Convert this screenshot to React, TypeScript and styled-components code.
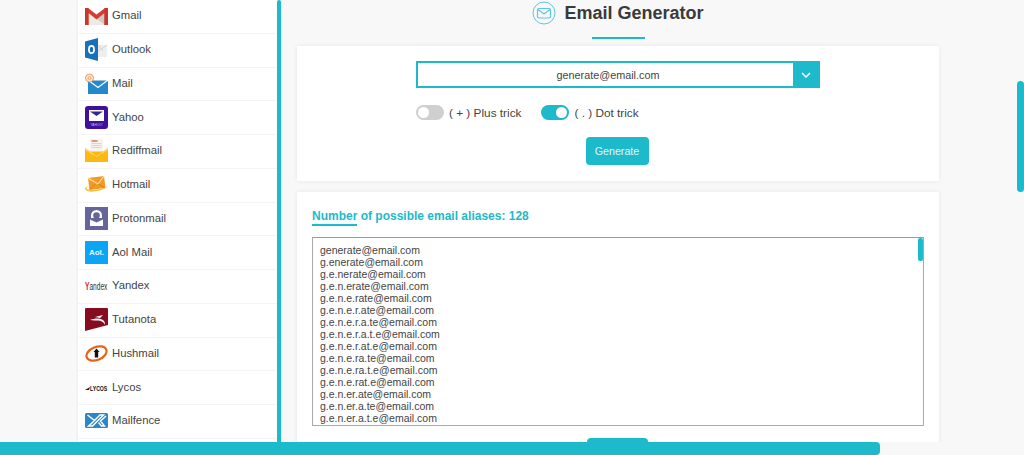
import React from "react";
import styled, { createGlobalStyle } from "styled-components";

const Global = createGlobalStyle`
  html, body { margin: 0; padding: 0; background: #f8f8f8; height: 100%; overflow: hidden; }
  body { font-family: "Liberation Sans", Arial, sans-serif; color: #333; }
`;

const teal = "#1cbaca";

const Page = styled.div`
  position: relative;
  width: 1024px;
  height: 455px;
  overflow: hidden;
  display: flex;
  padding-left: 78px;
  box-sizing: border-box;
`;
const Sidebar = styled.nav`
  width: 203px;
  flex: none;
  height: 455px;
  background: #fff;
  position: relative;
  box-shadow: 0 0 3px rgba(0, 0, 0, 0.08);
  box-sizing: border-box;
  padding-right: 4px;
`;
const SideThumb = styled.div`
  position: absolute;
  right: 0;
  top: 0;
  bottom: 0;
  width: 4px;
  background: ${teal};
  border-radius: 2px 2px 0 0;
`;
const Row = styled.a`
  display: flex;
  align-items: center;
  height: 33.75px;
  box-sizing: border-box;
  padding-left: 7px;
  gap: 4px;
  border-bottom: 1px solid #f4f4f4;
  font-size: 11.3px;
  color: #444;
`;
const RowLabel = styled.span`
  margin-top: -2px;
`;
const Main = styled.main`
  width: 642px;
  margin-left: 16px;
  flex: none;
  display: block;
`;
const Header = styled.header`
  height: 46px;
  display: flex;
  flex-direction: column;
  align-items: center;
  box-sizing: border-box;
`;
const TitleRow = styled.div`
  display: flex;
  align-items: center;
  gap: 8px;
  height: 26px;
`;
const Title = styled.h1`
  margin: 0;
  font-size: 18px;
  line-height: 26px;
  font-weight: 700;
  color: #3a3a3a;
`;
const TitleBar = styled.div`
  width: 53px;
  height: 2px;
  background: ${teal};
  margin-top: 11px;
`;
const Card = styled.section`
  background: #fff;
  box-shadow: 0 0 5px rgba(0, 0, 0, 0.07);
`;
const FormCard = styled(Card)`
  height: 135px;
  box-sizing: border-box;
  padding: 15px 119px 0;
  display: flex;
  flex-direction: column;
`;
const SelectBox = styled.div`
  display: flex;
  height: 27px;
  width: 404px;
  box-sizing: border-box;
  border: 2px solid ${teal};
`;
const SelectValue = styled.div`
  flex: 1;
  display: flex;
  align-items: center;
  justify-content: center;
  padding-left: 5px;
  font-size: 10.8px;
  color: #444;
`;
const SelectArrow = styled.div`
  width: 25px;
  background: ${teal};
  display: flex;
  align-items: center;
  justify-content: center;
`;
const Tricks = styled.div`
  display: flex;
  align-items: center;
  margin-top: 17px;
  height: 15px;
`;
const Trick = styled.label`
  display: flex;
  align-items: center;
  gap: 5px;
  font-size: 11.8px;
  color: #444;
  margin-right: 20px;
`;
const Toggle = styled.span<{ $on?: boolean }>`
  width: 28px;
  height: 15px;
  border-radius: 8px;
  background: ${(p) => (p.$on ? teal : "#cfcfcf")};
  display: flex;
  align-items: center;
  justify-content: ${(p) => (p.$on ? "flex-end" : "flex-start")};
  padding: 0 2px;
  box-sizing: border-box;
  &::after {
    content: "";
    width: 11px;
    height: 11px;
    border-radius: 50%;
    background: #fff;
  }
`;
const GenerateButton = styled.button`
  align-self: center;
  margin-top: 17px;
  margin-left: -2px;
  width: 63px;
  height: 28px;
  padding: 0;
  border: none;
  border-radius: 4px;
  background: ${teal};
  color: #e2f6f8;
  font: 10.7px "Liberation Sans", Arial, sans-serif;
`;
const ResultCard = styled(Card)`
  margin-top: 11px;
  height: 280px;
  box-sizing: border-box;
  padding: 17px 15px 0;
`;
const CountTitle = styled.h2`
  margin: 0;
  font-size: 12px;
  line-height: 14px;
  font-weight: 700;
  color: ${teal};
`;
const CountBar = styled.div`
  width: 45px;
  height: 2px;
  margin-top: 1px;
  background: ${teal};
`;
const Results = styled.div`
  position: relative;
  margin-top: 11px;
  height: 189px;
  box-sizing: border-box;
  border: 1px solid #aaa;
  border-top-color: #999;
  padding: 6px 7px 0;
  overflow: hidden;
  font-size: 10.5px;
  line-height: 12px;
  color: #444;
`;
const ResultThumb = styled.div`
  position: absolute;
  top: 0;
  right: 0;
  width: 5px;
  height: 23px;
  border-radius: 2px;
  background: ${teal};
`;
const BottomTrack = styled.div`
  position: absolute;
  left: 0;
  bottom: 0;
  width: 1017px;
  height: 13px;
  background: #f8f8f8;
`;
const BottomThumb = styled.div`
  width: 880px;
  height: 13px;
  background: ${teal};
  border-radius: 0 4px 4px 0;
`;
const BackTab = styled.div`
  position: absolute;
  left: 587px;
  bottom: 13px;
  width: 61px;
  height: 4px;
  background: ${teal};
  border-radius: 5px 5px 0 0;
`;
const PageGutter = styled.div`
  position: absolute;
  right: 0;
  top: 0;
  bottom: 0;
  width: 7px;
  background: #f8f8f8;
`;
const PageThumb = styled.div`
  position: absolute;
  right: 0;
  top: 81px;
  width: 7px;
  height: 111px;
  background: ${teal};
  border-radius: 4px;
`;

const Svg = styled.svg`
  width: 23px;
  height: 23px;
  flex: none;
  display: block;
  margin-top: -1px;
`;

const icons: Record<string, React.ReactNode> = {
  Gmail: (
    <Svg viewBox="0 0 23 23">
      <path d="M3 8l8.500 6.500L20 8v13H3z" fill="#efebe4" />
      <path d="M11.500 14.500L20 8v13z" fill="#cfc9c0" />
      <path d="M0 4h3l8.500 6.500L20 4h3v17h-3.500V9l-8 6.500L3.500 9v12H0z" fill="#d63c33" />
      <path d="M0 4h3.500v17H0zM19.500 4H23v17h-3.500z" fill="#c5372f" />
    </Svg>
  ),
  Outlook: (
    <Svg viewBox="0 0 23 23">
      <path d="M13 7l9 0v12h-9z" fill="#eee" />
      <path d="M13 13l9-6M13 7l5 6" stroke="#d5d5d5" strokeWidth="1" fill="none" />
      <path d="M0 3.500L13 0v23L0 19.500z" fill="#1a6fba" />
      <ellipse cx="6.500" cy="11.500" rx="2.600" ry="3.600" fill="none" stroke="#fff" strokeWidth="1.700" />
    </Svg>
  ),
  Mail: (
    <Svg viewBox="0 0 23 23">
      <path d="M3 8.500h20V22H3z" fill="#2389cc" />
      <path d="M3 8l10 7.500L23 8" stroke="#fff" strokeWidth="1.200" fill="none" />
      <circle cx="4.500" cy="6" r="4" fill="#fbeadc" stroke="#ef9a55" strokeWidth="1" />
      <circle cx="4.500" cy="6" r="1.500" fill="none" stroke="#ef9a55" strokeWidth="0.900" />
    </Svg>
  ),
  Yahoo: (
    <Svg viewBox="0 0 23 23">
      <rect width="23" height="23" rx="3" fill="#40109a" />
      <rect x="4" y="4" width="15" height="11" fill="#fff" />
      <path d="M5 5.500h13l-6.500 4.500z" fill="#2f2a90" />
      <text x="11.500" y="20" textAnchor="middle" fontFamily="Liberation Sans" fontSize="3.200" fill="#cdbdf0">
        YAHOO!
      </text>
    </Svg>
  ),
  Rediffmail: (
    <Svg viewBox="0 0 23 23">
      <path d="M5 0h13v13H5z" fill="#f6f3ee" />
      <path d="M6.500 2h6" stroke="#c33" strokeWidth="1" />
      <path d="M6.500 4.500h10M6.500 6.500h10M6.500 8.500h10" stroke="#d6d3cc" strokeWidth="0.900" />
      <path d="M0 9l5 3.500h13L23 9v14H0z" fill="#fdb813" />
      <path d="M0 9l11.500 8L23 9v2l-11.500 7L0 11z" fill="#ffd36a" />
    </Svg>
  ),
  Hotmail: (
    <Svg viewBox="0 0 23 23">
      <path d="M3 5l16-2 1.500 12L4.500 17z" fill="#f39a24" />
      <path d="M3 5l10 6 6-8" fill="none" stroke="#fde0a8" strokeWidth="1.100" />
      <path d="M4.500 17l6-6M20 15l-7-4" stroke="#d9761a" strokeWidth="0.900" fill="none" />
      <path d="M0 15.500c2-3 3-3 3-3s-2 2-1 3.500c2 2 14 1 21-3-6 6-22 8-23 2.500z" fill="#f4c542" />
    </Svg>
  ),
  Protonmail: (
    <Svg viewBox="0 0 23 23">
      <rect width="23" height="23" fill="#65659c" />
      <path d="M6 11V8.500a5.500 5.500 0 0 1 11 0V11z" fill="#fff" />
      <circle cx="11.500" cy="8.500" r="3.300" fill="#65659c" />
      <path d="M5 12.500l6.500 3L18 12.500V19H5z" fill="#fff" />
    </Svg>
  ),
  "Aol Mail": (
    <Svg viewBox="0 0 23 23">
      <rect width="23" height="23" fill="#0aa5f5" />
      <text x="11.500" y="14" textAnchor="middle" fontFamily="Liberation Sans" fontSize="8" fontWeight="700" fill="#e8f6ff">
        Aol.
      </text>
    </Svg>
  ),
  Yandex: (
    <Svg viewBox="0 0 23 23">
      <text transform="translate(0 16) scale(0.63 1)" fontFamily="Liberation Sans" fontSize="10.500" fill="#333">
        <tspan fill="#d2232a" fontWeight="700">Y</tspan>andex
      </text>
    </Svg>
  ),
  Tutanota: (
    <Svg viewBox="0 0 23 23">
      <path d="M1 0h21a1 1 0 0 1 1 1v16L0 23V1a1 1 0 0 1 1-1z" fill="#850d1e" />
      <path d="M5 12c5-2 9-2 12-.5 2 1 3 2.500 3 5.500-1-3-4-4.500-7-4.500-2 0-5 0-8-.5zM10 9l8-2-3 3z" fill="#fff" />
    </Svg>
  ),
  Hushmail: (
    <Svg viewBox="0 0 23 23">
      <ellipse cx="11.500" cy="11.500" rx="10.500" ry="6.500" transform="rotate(-22 11.500 11.500)" fill="none" stroke="#e8631a" strokeWidth="2.200" />
      <path d="M11.500 6.500l3 3.500h-1.300v5.500H9.800V10H8.500z" fill="#111" />
    </Svg>
  ),
  Lycos: (
    <Svg viewBox="0 0 23 23">
      <path d="M0 14l5-3-1 3z" fill="#222" />
      <text transform="translate(5 14.500) scale(0.74 1)" fontFamily="Liberation Sans" fontSize="7" fontWeight="700" fill="#111">
        LYCOS
      </text>
    </Svg>
  ),
  Mailfence: (
    <Svg viewBox="0 0 23 23">
      <path d="M1.500 4h20a1.500 1.500 0 0 1 1.500 1.500v12a1.500 1.500 0 0 1-1.500 1.500h-20A1.500 1.500 0 0 1 0 17.500v-12A1.500 1.500 0 0 1 1.500 4z" fill="#2f86c6" />
      <path d="M2.500 6l7 5.500-6 5.500h4l11-11h-3.500l-9 9M21 7l-5.500 5 4 5h-3l-3-3.500" fill="none" stroke="#fff" strokeWidth="1.400" />
    </Svg>
  ),
};

const aliases = [
  "generate", "g.enerate", "g.e.nerate", "g.e.n.erate", "g.e.n.e.rate", "g.e.n.e.r.ate",
  "g.e.n.e.r.a.te", "g.e.n.e.r.a.t.e", "g.e.n.e.r.at.e", "g.e.n.e.ra.te", "g.e.n.e.ra.t.e",
  "g.e.n.e.rat.e", "g.e.n.er.ate", "g.e.n.er.a.te", "g.e.n.er.a.t.e",
];

export default function App() {
  return (
    <>
      <Global />
      <Page>
        <Sidebar>
          {Object.keys(icons).map((name) => (
            <Row key={name}>
              {icons[name]}
              <RowLabel>{name}</RowLabel>
            </Row>
          ))}
          <SideThumb />
        </Sidebar>
        <Main>
          <Header>
            <TitleRow>
              <svg width="24" height="24" viewBox="0 0 24 24" fill="none" stroke="#62c4e6" strokeWidth="1">
                <circle cx="12" cy="12" r="11" />
                <rect x="5.500" y="7.500" width="13" height="9.500" rx="1.500" strokeWidth="1.200" />
                <path d="M6 8.500l6 4.500 6-4.500" strokeWidth="1.200" />
              </svg>
              <Title>Email Generator</Title>
            </TitleRow>
            <TitleBar />
          </Header>
          <FormCard>
            <SelectBox>
              <SelectValue>generate@email.com</SelectValue>
              <SelectArrow>
                <svg width="10" height="6" viewBox="0 0 10 6" fill="none" stroke="#fff" strokeWidth="1.500">
                  <path d="M1 1l4 4 4-4" />
                </svg>
              </SelectArrow>
            </SelectBox>
            <Tricks>
              <Trick>
                <Toggle />( + ) Plus trick
              </Trick>
              <Trick>
                <Toggle $on />( . ) Dot trick
              </Trick>
            </Tricks>
            <GenerateButton>Generate</GenerateButton>
          </FormCard>
          <ResultCard>
            <CountTitle>Number of possible email aliases: 128</CountTitle>
            <CountBar />
            <Results>
              {aliases.map((a) => (
                <div key={a}>{a}@email.com</div>
              ))}
              <ResultThumb />
            </Results>
          </ResultCard>
        </Main>
        <PageGutter />
        <PageThumb />
        <BackTab />
        <BottomTrack>
          <BottomThumb />
        </BottomTrack>
      </Page>
    </>
  );
}
